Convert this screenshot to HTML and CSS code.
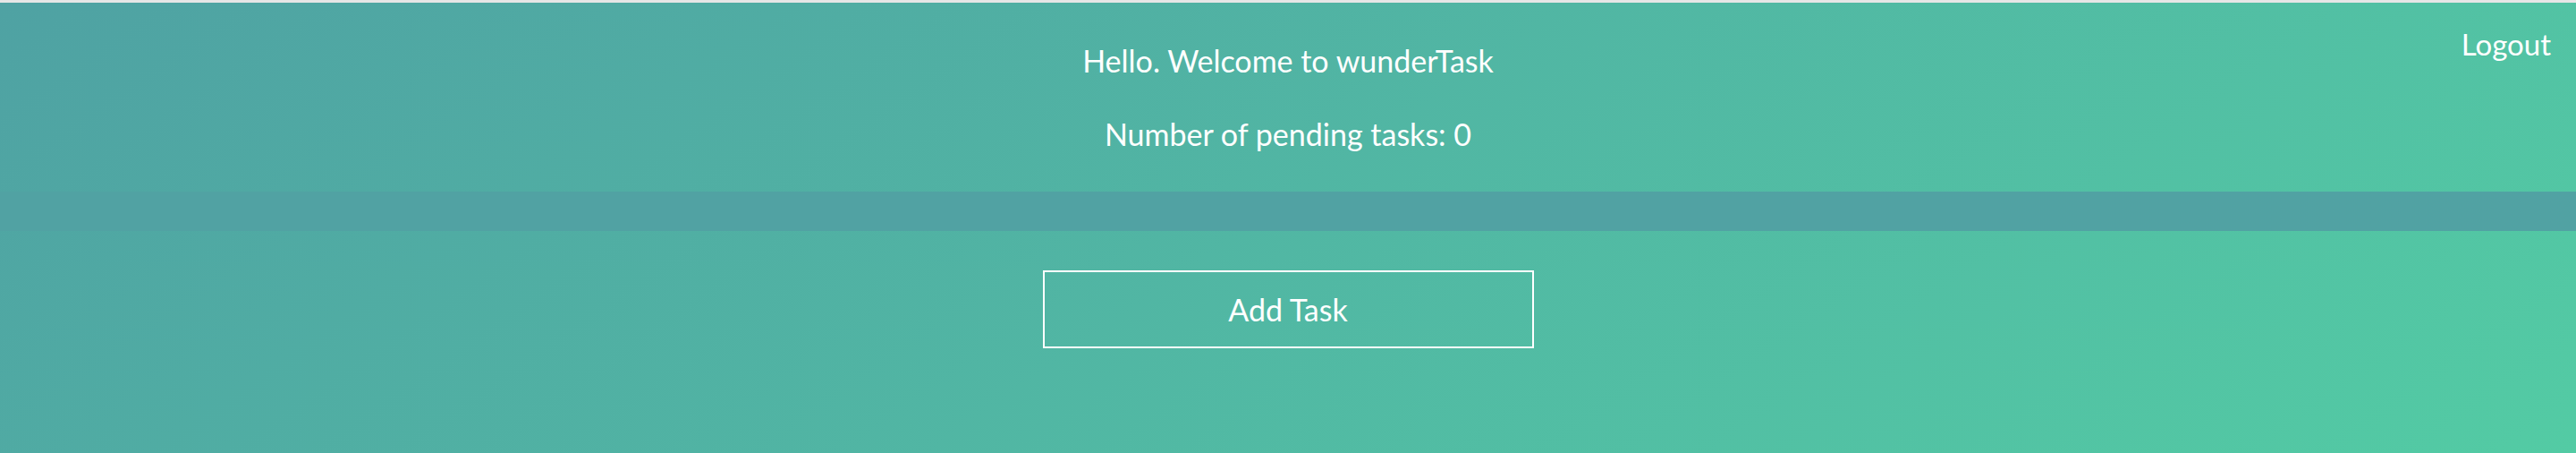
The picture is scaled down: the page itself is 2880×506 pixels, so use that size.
FILE: index.html
```html
<!DOCTYPE html>
<html lang="en">
<head>
<meta charset="utf-8">
<title>wunderTask</title>
<link rel="stylesheet" href="styles.css">
</head>
<body>
<div class="chrome-strip"></div>
<div class="page">
  <header class="top">
    <div class="spacer"></div>
    <div class="greeting">
      <p class="line">Hello. Welcome to wunderTask</p>
      <p class="line second">Number of pending tasks: 0</p>
    </div>
    <a class="logout" href="#">Logout</a>
  </header>
  <div class="band"></div>
  <main class="main">
    <button class="add-btn" type="button">Add Task</button>
  </main>
</div>
</body>
</html>
```

FILE: styles.css
```css
html, body {
  margin: 0;
  padding: 0;
  height: 100%;
}
body {
  font-family: "Lato", "Liberation Sans", sans-serif;
  color: #ffffff;
  display: flex;
  flex-direction: column;
  background: #50a5a3;
}
.chrome-strip {
  height: 3px;
  background: #e6e6e6;
  flex: none;
}
.page {
  flex: 1;
  display: flex;
  flex-direction: column;
  background: linear-gradient(145deg, #4fa2a3 0%, #53cba4 100%);
}
.top {
  display: grid;
  grid-template-columns: 1fr auto 1fr;
  padding: 0 28px;
  height: 211px;
  box-sizing: border-box;
}
.greeting {
  padding-top: 44px;
  text-align: center;
}
.line {
  margin: 0;
  font-size: 34px;
  line-height: 42px;
}
.second {
  margin-top: 40px;
}
.logout {
  justify-self: end;
  align-self: start;
  margin-top: 26px;
  font-size: 33px;
  line-height: 40px;
  color: #ffffff;
  text-decoration: none;
}
.band {
  height: 44px;
  background: #51a2a3;
}
.main {
  flex: 1;
  display: flex;
  justify-content: center;
  align-items: flex-start;
  padding-top: 44px;
}
.add-btn {
  width: 549px;
  height: 87px;
  border: 2px solid #ffffff;
  background: transparent;
  color: #ffffff;
  font-family: "Lato", "Liberation Sans", sans-serif;
  font-size: 34px;
  line-height: 42px;
  padding: 0;
  cursor: pointer;
}
```
